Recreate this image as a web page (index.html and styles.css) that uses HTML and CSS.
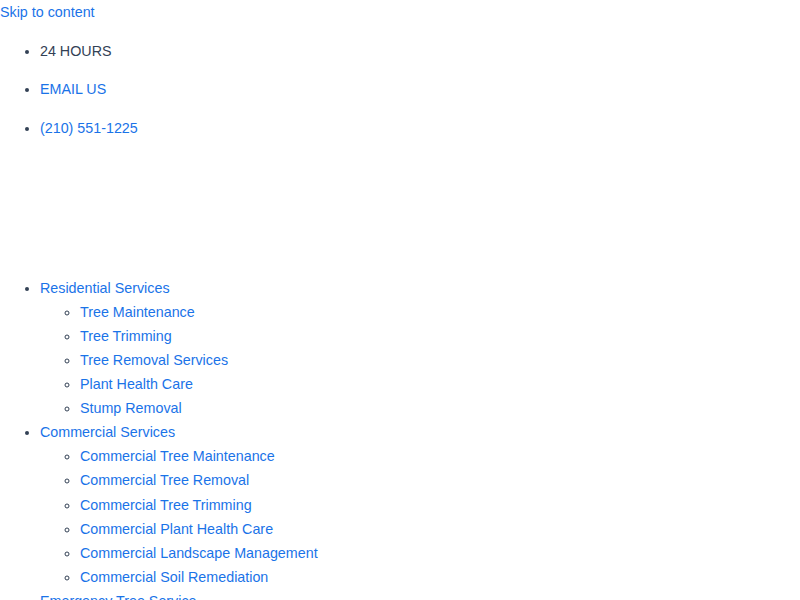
FILE: index.html
```html
<!DOCTYPE html>
<html lang="en">
<head>
<meta charset="utf-8">
<title>Tree Service</title>
<link rel="stylesheet" href="styles.css">
</head>
<body>
<a class="skip-link" href="#content">Skip to content</a>
<ul class="top-bar">
  <li>24 HOURS</li>
  <li><a href="#">EMAIL US</a></li>
  <li><a href="#">(210) 551-1225</a></li>
</ul>
<div class="logo-space"></div>
<ul class="main-menu">
  <li><a href="#">Residential Services</a>
    <ul class="sub-menu">
      <li><a href="#">Tree Maintenance</a></li>
      <li><a href="#">Tree Trimming</a></li>
      <li><a href="#">Tree Removal Services</a></li>
      <li><a href="#">Plant Health Care</a></li>
      <li><a href="#">Stump Removal</a></li>
    </ul>
  </li>
  <li><a href="#">Commercial Services</a>
    <ul class="sub-menu">
      <li><a href="#">Commercial Tree Maintenance</a></li>
      <li><a href="#">Commercial Tree Removal</a></li>
      <li><a href="#">Commercial Tree Trimming</a></li>
      <li><a href="#">Commercial Plant Health Care</a></li>
      <li><a href="#">Commercial Landscape Management</a></li>
      <li><a href="#">Commercial Soil Remediation</a></li>
    </ul>
  </li>
  <li><a href="#">Emergency Tree Service</a></li>
  <li><a href="#">About Us</a></li>
  <li><a href="#">Contact</a></li>
</ul>
</body>
</html>
```
FILE: styles.css
```css
html, body {
  margin: 0;
  padding: 0;
}
body {
  font-family: "Liberation Sans", Arial, sans-serif;
  font-size: 14.3px;
  line-height: 24.1px;
  color: #334155;
  background: #ffffff;
}
a {
  color: #1a73e8;
  text-decoration: none;
}
.skip-link {
  display: block;
  width: max-content;
}
.top-bar {
  margin: 14.5px 0 0;
  padding-left: 40px;
}
.top-bar li + li {
  margin-top: 14.4px;
}
.logo-space {
  height: 136px;
}
.main-menu {
  margin: 0;
  padding-left: 40px;
  list-style: disc;
}
.sub-menu {
  margin: 0;
  padding-left: 40px;
  list-style: circle;
}
```
